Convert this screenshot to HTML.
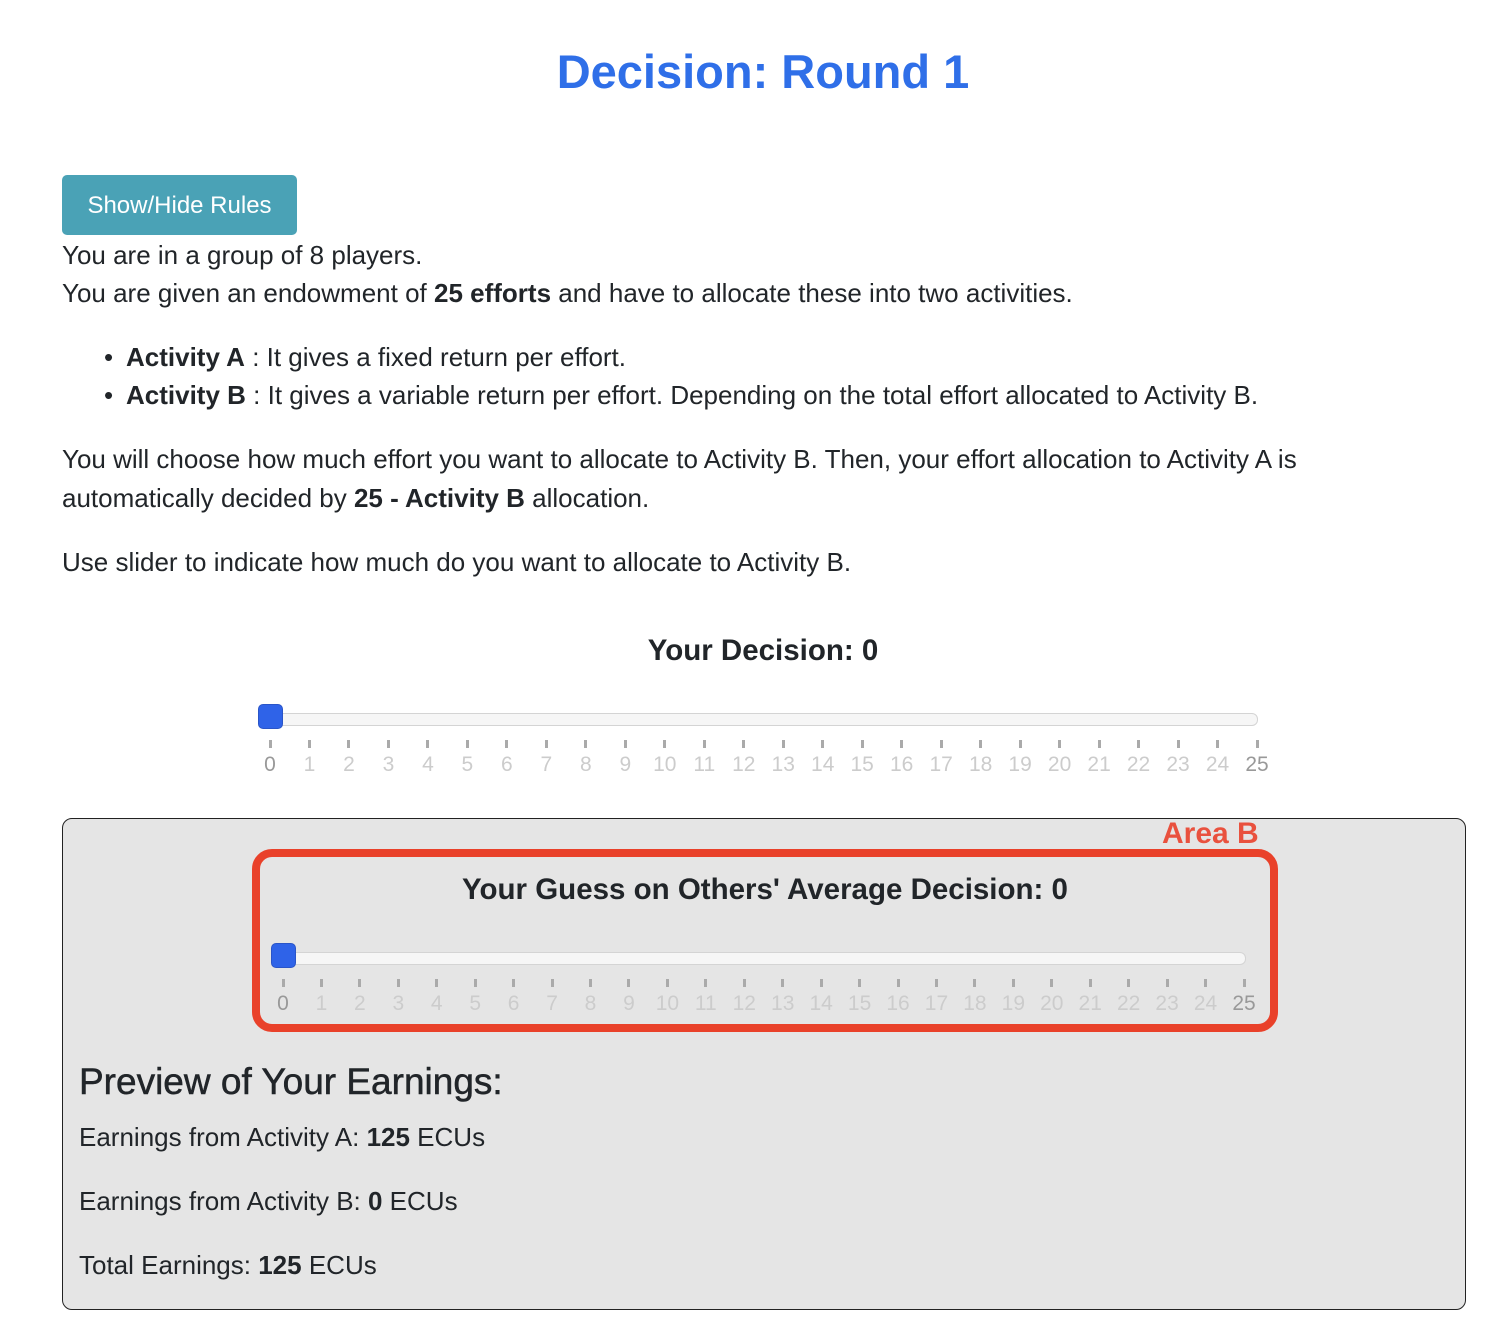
<!DOCTYPE html>
<html><head><meta charset="utf-8"><style>
body{margin:0;width:1504px;height:1330px;background:#fff;font-family:"Liberation Sans",sans-serif;color:#212529;position:relative;overflow:hidden}
.a{position:absolute;white-space:nowrap;font-size:26px;line-height:28px}
h1{position:absolute;left:0;width:1526px;top:44px;margin:0;text-align:center;font-size:47px;line-height:56px;color:#2f6fe8;font-weight:bold}
.btn{position:absolute;left:62px;top:175px;width:235px;height:60px;background:#4aa2b6;border-radius:5px;color:#fff;font-size:24px;line-height:62px;text-align:center}
.track{position:absolute;height:11px;background:#f6f6f6;border:1px solid #d4d4d4;border-radius:6px}
.thumb{position:absolute;width:25px;height:25px;background:#2f63e8;border:1px solid #2a55c8;border-radius:5px;box-sizing:border-box}
.t{position:absolute;width:3px;height:8px;background:#aaa}
.l{position:absolute;width:40px;text-align:center;font-size:21px;line-height:22px;color:#ccc}
.panel{position:absolute;left:62px;top:818px;width:1402px;height:490px;background:#e5e5e5;border:1px solid #222;border-radius:10px}
.red{position:absolute;left:252px;top:849px;width:1010px;height:167px;border:8px solid #e9412a;border-radius:20px}
</style></head><body>
<h1>Decision: Round 1</h1>
<div class="btn">Show/Hide Rules</div>
<div class="a" style="left:62px;top:241px">You are in a group of 8 players.</div>
<div class="a" style="left:62px;top:279px">You are given an endowment of <b>25 efforts</b> and have to allocate these into two activities.</div>
<div class="a" style="left:104px;top:343px">•</div><div class="a" style="left:126px;top:343px"><b>Activity A</b> : It gives a fixed return per effort.</div>
<div class="a" style="left:104px;top:381px">•</div><div class="a" style="left:126px;top:381px"><b>Activity B</b> : It gives a variable return per effort. Depending on the total effort allocated to Activity B.</div>
<div class="a" style="left:62px;top:445px">You will choose how much effort you want to allocate to Activity B. Then, your effort allocation to Activity A is</div>
<div class="a" style="left:62px;top:484px">automatically decided by <b>25 - Activity B</b> allocation.</div>
<div class="a" style="left:62px;top:548px">Use slider to indicate how much do you want to allocate to Activity B.</div>
<div class="a" style="left:0;width:1526px;text-align:center;top:636px;font-weight:bold;font-size:29.5px;line-height:30px">Your Decision: 0</div>
<div class="track" style="left:259px;top:713px;width:997px"></div>
<div class="thumb" style="left:258px;top:704px"></div>
<div id="s1"></div>
<div class="panel"></div>
<div class="a" style="left:1162px;top:819px;color:#e9513e;font-weight:bold;font-size:30px;line-height:30px">Area B</div>
<div class="red"></div>
<div class="a" style="left:252px;width:1026px;text-align:center;top:875px;font-weight:bold;font-size:29.5px;line-height:30px">Your Guess on Others' Average Decision: 0</div>
<div class="track" style="left:272px;top:952px;width:972px"></div>
<div class="thumb" style="left:271px;top:943px"></div>
<div id="s2"></div>
<div class="a" style="left:79px;top:1062px;font-size:37px;line-height:40px;-webkit-text-stroke:0.5px #212529">Preview of Your Earnings:</div>
<div class="a" style="left:79px;top:1123px">Earnings from Activity A: <b>125</b> ECUs</div>
<div class="a" style="left:79px;top:1187px">Earnings from Activity B: <b>0</b> ECUs</div>
<div class="a" style="left:79px;top:1251px">Total Earnings: <b>125</b> ECUs</div>
<script>
function mk(id,x0,dx,ty,ly){var h='';for(var i=0;i<=25;i++){var x=x0+dx*i;h+='<div class="t" style="left:'+(x-1.5)+'px;top:'+ty+'px"></div><div class="l" style="left:'+(x-20)+'px;top:'+ly+'px;'+((i==0||i==25)?'color:#999':'')+'">'+i+'</div>';}document.getElementById(id).innerHTML=h;}
mk('s1',270,39.48,740,754);mk('s2',283,38.44,979,993);
</script>
</body></html>
